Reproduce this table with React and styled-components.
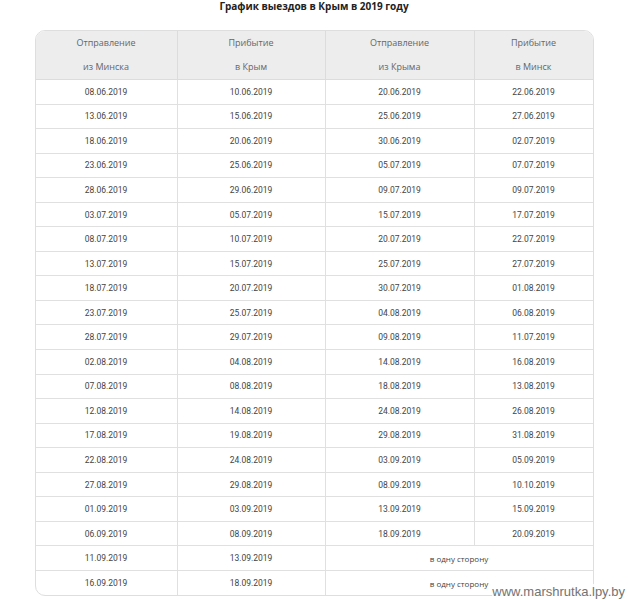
import styled, { createGlobalStyle } from 'styled-components';

const rows = [
    ["08.06.2019", "10.06.2019", "20.06.2019", "22.06.2019"],
    ["13.06.2019", "15.06.2019", "25.06.2019", "27.06.2019"],
    ["18.06.2019", "20.06.2019", "30.06.2019", "02.07.2019"],
    ["23.06.2019", "25.06.2019", "05.07.2019", "07.07.2019"],
    ["28.06.2019", "29.06.2019", "09.07.2019", "09.07.2019"],
    ["03.07.2019", "05.07.2019", "15.07.2019", "17.07.2019"],
    ["08.07.2019", "10.07.2019", "20.07.2019", "22.07.2019"],
    ["13.07.2019", "15.07.2019", "25.07.2019", "27.07.2019"],
    ["18.07.2019", "20.07.2019", "30.07.2019", "01.08.2019"],
    ["23.07.2019", "25.07.2019", "04.08.2019", "06.08.2019"],
    ["28.07.2019", "29.07.2019", "09.08.2019", "11.07.2019"],
    ["02.08.2019", "04.08.2019", "14.08.2019", "16.08.2019"],
    ["07.08.2019", "08.08.2019", "18.08.2019", "13.08.2019"],
    ["12.08.2019", "14.08.2019", "24.08.2019", "26.08.2019"],
    ["17.08.2019", "19.08.2019", "29.08.2019", "31.08.2019"],
    ["22.08.2019", "24.08.2019", "03.09.2019", "05.09.2019"],
    ["27.08.2019", "29.08.2019", "08.09.2019", "10.10.2019"],
    ["01.09.2019", "03.09.2019", "13.09.2019", "15.09.2019"],
    ["06.09.2019", "08.09.2019", "18.09.2019", "20.09.2019"],
    ["11.09.2019", "13.09.2019"],
    ["16.09.2019", "18.09.2019"],
];

const heads = [
    ["Отправление", "из Минска"],
    ["Прибытие", "в Крым"],
    ["Отправление", "из Крыма"],
    ["Прибытие", "в Минск"],
];

export default function App(){
    return(
        <>
            <GlobalStyle />
            <Page>
                <Title>График выездов в Крым в 2019 году</Title>
                <Table>
                    <colgroup>
                        <col style={{width: 142}} />
                        <col style={{width: 148}} />
                        <col style={{width: 149}} />
                        <col style={{width: 118}} />
                    </colgroup>
                    <thead>
                        <tr>
                            {heads.map((h, i) => (
                                <HeadCell key={i}>
                                    <HeadLine>{h[0]}</HeadLine>
                                    <HeadLine>{h[1]}</HeadLine>
                                </HeadCell>
                            ))}
                        </tr>
                    </thead>
                    <tbody>
                        {rows.map((r, i) => (
                            <Row key={i}>
                                {r.map((d, j) => <Cell key={j}>{d}</Cell>)}
                                {r.length === 2 && <OneWay colSpan={2}>в одну сторону</OneWay>}
                            </Row>
                        ))}
                    </tbody>
                </Table>
                <Watermark>www.marshrutka.lpy.by</Watermark>
            </Page>
        </>
    )
}

const GlobalStyle = createGlobalStyle`
    body{
        margin: 0;
        background: #ffffff;
        font-family: 'Open Sans', sans-serif;
    }
`;

const Page = styled.div`
    position: relative;
    width: 628px;
    height: 600px;
    display: flex;
    flex-direction: column;
    align-items: center;
    overflow: hidden;
`;

const Title = styled.h1`
    margin: 0;
    font-family: 'Open Sans', sans-serif;
    font-weight: 700;
    font-size: 10px;
    line-height: 12px;
    color: #222;
`;

const Table = styled.table`
    margin-top: 18px;
    width: 557px;
    table-layout: fixed;
    border-collapse: separate;
    border-spacing: 0;
    border: 1px solid #dedede;
    border-radius: 10px;
    overflow: hidden;
    box-sizing: border-box;
`;

const HeadCell = styled.th`
    background: #ededed;
    font-weight: 400;
    font-size: 9px;
    color: #666;
    padding: 0;
    border-right: 1px solid #dcdcdc;
    border-bottom: 1px solid #dcdcdc;
    &:last-child{ border-right: none; }
`;

const HeadLine = styled.div`
    height: 24px;
    line-height: 24px;
`;

const Row = styled.tr`
    height: 24.55px;
    &:last-child td{ border-bottom: none; }
`;

const Cell = styled.td`
    padding: 0;
    text-align: center;
    font-family: Roboto, sans-serif;
    font-size: 8.5px;
    color: #444;
    border-right: 1px solid #e0e0e0;
    border-bottom: 1px solid #e0e0e0;
    &:last-child{ border-right: none; }
`;

const OneWay = styled(Cell)`
    font-family: 'Open Sans', sans-serif;
    font-size: 8px;
    color: #444;
`;

const Watermark = styled.div`
    position: absolute;
    right: 3px;
    bottom: 1px;
    font-family: 'Liberation Sans', Arial, sans-serif;
    font-size: 13px;
    color: #737373;
    background: rgba(255,255,255,0.85);
`;
